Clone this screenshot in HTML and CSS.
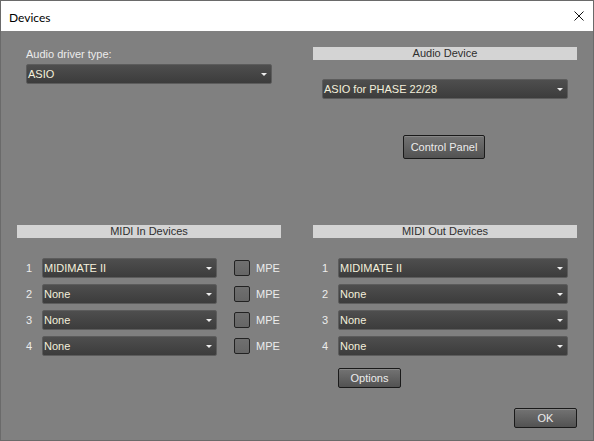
FILE: index.html
```html
<!DOCTYPE html>
<html>
<head>
<meta charset="utf-8">
<link rel="stylesheet" href="styles.css">
</head>
<body>
<div class="window">
  <div class="titlebar">
    <span class="title">Devices</span>
    <svg class="close" width="10" height="10" viewBox="0 0 10 10"><path d="M0.5 0.5 L9.5 9.5 M9.5 0.5 L0.5 9.5" stroke="#111" stroke-width="1" fill="none"/></svg>
  </div>
  <div class="content">
    <div class="grid top">
      <div class="col">
        <div class="label">Audio driver type:</div>
        <div class="combo inset"><span>ASIO</span><i class="arrow"></i></div>
      </div>
      <div class="col">
        <div class="header">Audio Device</div>
        <div class="combo inset phase"><span>ASIO for PHASE 22/28</span><i class="arrow"></i></div>
        <div class="center"><button class="btn cp">Control Panel</button></div>
      </div>
    </div>
    <div class="grid bottom">
      <div class="col">
        <div class="header">MIDI In Devices</div>
        <div class="rows">
          <div class="row"><span class="num">1</span><div class="combo in"><span>MIDIMATE II</span><i class="arrow"></i></div><span class="check"></span><span class="mpe">MPE</span></div>
          <div class="row"><span class="num">2</span><div class="combo in"><span>None</span><i class="arrow"></i></div><span class="check"></span><span class="mpe">MPE</span></div>
          <div class="row"><span class="num">3</span><div class="combo in"><span>None</span><i class="arrow"></i></div><span class="check"></span><span class="mpe">MPE</span></div>
          <div class="row"><span class="num">4</span><div class="combo in"><span>None</span><i class="arrow"></i></div><span class="check"></span><span class="mpe">MPE</span></div>
        </div>
      </div>
      <div class="col">
        <div class="header">MIDI Out Devices</div>
        <div class="rows">
          <div class="row"><span class="num">1</span><div class="combo out"><span>MIDIMATE II</span><i class="arrow"></i></div></div>
          <div class="row"><span class="num">2</span><div class="combo out"><span>None</span><i class="arrow"></i></div></div>
          <div class="row"><span class="num">3</span><div class="combo out"><span>None</span><i class="arrow"></i></div></div>
          <div class="row"><span class="num">4</span><div class="combo out"><span>None</span><i class="arrow"></i></div></div>
        </div>
        <div class="opts"><button class="btn options">Options</button></div>
      </div>
    </div>
    <div class="footer"><button class="btn ok">OK</button></div>
  </div>
</div>
</body>
</html>
```
FILE: styles.css
```css
html, body {
  margin: 0;
  padding: 0;
}
body {
  width: 594px;
  height: 441px;
  overflow: hidden;
  font-family: "Liberation Sans", Arial, sans-serif;
  font-size: 11px;
}
.window {
  width: 594px;
  height: 441px;
  box-sizing: border-box;
  border: 1px solid #6a6a6a;
  background: #808080;
  display: flex;
  flex-direction: column;
}
.titlebar {
  height: 30px;
  background: #ffffff;
  display: flex;
  align-items: center;
  justify-content: space-between;
  padding: 0 9px 0 8px;
  flex: none;
}
.title {
  font-family: "Lato", "Noto Sans", sans-serif;
  font-size: 12px;
  color: #000;
  position: relative;
  top: 1px;
}
.close {
  display: block;
  position: relative;
  top: 0px;
}
.content {
  flex: 1;
  display: flex;
  flex-direction: column;
  padding: 0 16px;
}
.grid {
  display: grid;
  grid-template-columns: 264px 264px;
  column-gap: 32px;
}
.top {
  padding-top: 16px;
  height: 112px;
}
.col {
  display: flex;
  flex-direction: column;
}
.label {
  color: #ececec;
  line-height: 13px;
  margin: 1px 9px 0;
}
.header {
  background: #d4d4d4;
  color: #2e2e2e;
  height: 13px;
  line-height: 13px;
  text-align: center;
}
.combo {
  box-sizing: border-box;
  height: 20px;
  border: 1px solid #5c5c5c;
  border-radius: 2px;
  background: linear-gradient(#4e4e4e, #3c3c3c);
  color: #f4f0dc;
  display: flex;
  align-items: center;
  justify-content: space-between;
  padding: 0 4px 0 1px;
  line-height: 13px;
  white-space: nowrap;
}
.inset {
  margin: 3px 9px 0;
}
.phase {
  margin-top: 19px;
}
.arrow {
  display: block;
  width: 0;
  height: 0;
  border-left: 3px solid transparent;
  border-right: 3px solid transparent;
  border-top: 3px solid #eeeeee;
  margin-top: 1px;
}
.center {
  display: flex;
  justify-content: center;
  margin-top: 36px;
}
.btn {
  box-sizing: border-box;
  font-family: "Liberation Sans", Arial, sans-serif;
  font-size: 11px;
  color: #ececec;
  border: 1px solid #1a1a1a;
  border-radius: 2px;
  background: linear-gradient(#737373, #525252);
  box-shadow: inset 0 1px 0 rgba(255,255,255,0.15);
  padding: 0;
  margin: 0;
  line-height: 13px;
}
.cp {
  width: 82px;
  height: 24px;
  position: relative;
  left: -1px;
}
.bottom {
  margin-top: 66px;
}
.rows {
  display: flex;
  flex-direction: column;
  gap: 6px;
  margin-top: 20px;
  padding-left: 9px;
  padding-right: 9px;
}
.row {
  display: flex;
  align-items: center;
  height: 20px;
}
.num {
  width: 16px;
  color: #ececec;
  flex: none;
}
.combo.in {
  width: 175px;
  flex: none;
}
.combo.out {
  flex: 1;
}
.check {
  box-sizing: border-box;
  width: 16px;
  height: 16px;
  border: 1px solid #222;
  border-radius: 2px;
  background: linear-gradient(#707070, #666666);
  margin-left: 17px;
  flex: none;
}
.mpe {
  color: #ececec;
  margin-left: 6px;
}
.opts {
  padding-left: 25px;
  margin-top: 12px;
}
.options {
  width: 63px;
  height: 20px;
}
.footer {
  display: flex;
  justify-content: flex-end;
  margin-top: 20px;
}
.ok {
  width: 63px;
  height: 20px;
}
```
